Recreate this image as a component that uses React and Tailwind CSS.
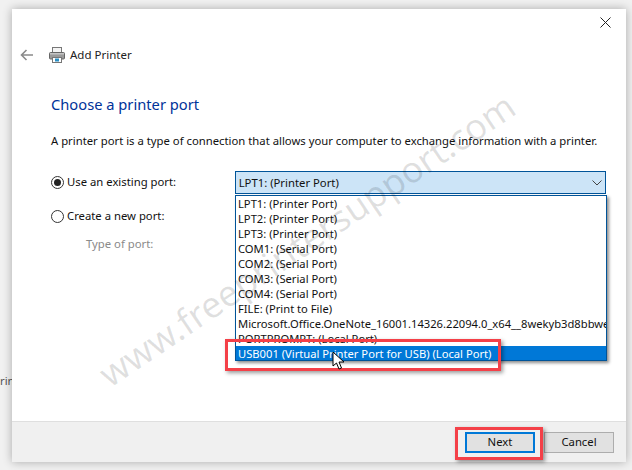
import React from 'react';

const ports = [
  'LPT1: (Printer Port)',
  'LPT2: (Printer Port)',
  'LPT3: (Printer Port)',
  'COM1: (Serial Port)',
  'COM2: (Serial Port)',
  'COM3: (Serial Port)',
  'COM4: (Serial Port)',
  'FILE: (Print to File)',
  'Microsoft.Office.OneNote_16001.14326.22094.0_x64__8wekyb3d8bbwe',
  'PORTPROMPT: (Local Port)',
];

const PrinterIcon = () => (
  <svg width="16" height="16" viewBox="0 0 16 16">
    <rect x="3.5" y="0.5" width="9" height="5" fill="#f4f4f4" stroke="#777" />
    <rect x="0.5" y="5.5" width="15" height="6.5" rx="1" fill="#9a9a9a" stroke="#666" />
    <rect x="1" y="6" width="14" height="1.5" fill="#c4c4c4" />
    <rect x="3.5" y="10.5" width="9" height="5" fill="#fff" stroke="#777" />
    <rect x="6" y="11.5" width="4" height="3" fill="#2a8fc4" />
  </svg>
);

const Radio = ({ checked }) => (
  <span className="w-[13px] h-[13px] rounded-full border border-[#333] flex items-center justify-center shrink-0 bg-white">
    {checked && <span className="w-[7px] h-[7px] rounded-full bg-[#222]" />}
  </span>
);

const Cursor = () => (
  <svg width="14" height="20" viewBox="0 0 14 20">
    <path d="M1 1 L1 15 L4.5 12 L7 18 L9.5 17 L7 11 L12 11 Z" fill="#fff" stroke="#000" strokeWidth="1" />
  </svg>
);

export default function App() {
  return (
    <div className="relative w-[632px] h-[470px] overflow-hidden bg-[#f1f1f1] pt-[9px] pl-[12px] font-['Noto_Sans',sans-serif] text-[11.3px] text-[#111]">
      {/* остаток текста за окном */}
      <span className="absolute left-0 top-[373px] text-[#555]">rin</span>

      <div className="relative w-[614px] h-[453px] bg-white flex flex-col shadow-[0_0_9px_rgba(0,0,0,0.3)]">
        <div className="flex justify-end pt-[8px] pr-[15px] h-[32px]">
          <svg width="11" height="11" viewBox="0 0 11 11" stroke="#222" strokeWidth="1">
            <path d="M0.5 0.5 L10.5 10.5 M10.5 0.5 L0.5 10.5" />
          </svg>
        </div>

        <div className="flex items-center h-[28px] pl-[8px]">
          <svg width="14" height="12" viewBox="0 0 14 12" fill="none" stroke="#8a8a8a" strokeWidth="1.6">
            <path d="M13 6 L1.5 6 M6.5 1 L1.5 6 L6.5 11" />
          </svg>
          <span className="ml-[15px]"><PrinterIcon /></span>
          <span className="ml-[5px] text-[#222] text-[11.5px]">Add Printer</span>
        </div>

        <div className="flex-1 pl-[39px] pr-[20px] pt-[24px]">
          <h1 className="text-[14.7px] leading-[22px] text-[#003399]">Choose a printer port</h1>
          <p className="mt-[16px] leading-[20px] whitespace-nowrap">A printer port is a type of connection that allows your computer to exchange information with a printer.</p>

          <div className="mt-[20px] flex items-center h-[23px]">
            <Radio checked />
            <span className="ml-[3px] w-[168px]">Use an existing port:</span>
            <div className="w-[372px] h-[23px] bg-[#cce4f7] border border-[#005499] flex items-center justify-between pl-[3px] pr-[3px]">
              <span className="pt-px">LPT1: (Printer Port)</span>
              <svg width="10" height="6" viewBox="0 0 10 6" fill="none" stroke="#444" strokeWidth="1">
                <path d="M0.5 0.5 L5 5 L9.5 0.5" />
              </svg>
            </div>
          </div>

          <div className="mt-[11px] flex items-center h-[23px]">
            <Radio />
            <span className="ml-[3px]">Create a new port:</span>
          </div>

          <div className="mt-[6px] ml-[35px] leading-[20px] text-[#8a8a8a]">Type of port:</div>
        </div>

        <div className="h-[41px] bg-[#f0f0f0] border-t border-[#dfdfdf] flex justify-end items-center gap-[9px] pr-[12px]">
          <button className="w-[70px] h-[21px] bg-[#e1e1e1] border-2 border-[#0078d7] text-[#111]">Next</button>
          <button className="w-[70px] h-[21px] bg-[#e1e1e1] border border-[#adadad] text-[#111]">Cancel</button>
        </div>
      </div>

      {/* раскрытый список */}
      <div className="absolute left-[235px] top-[195px] w-[372px] h-[166px] bg-white border border-[#005499] shadow-[2px_2px_3px_rgba(0,0,0,0.45)] overflow-hidden text-[11.2px]">
        {ports.map((p) => (
          <div key={p} className="h-[15px] leading-[15px] pl-[2px] whitespace-nowrap overflow-hidden">{p}</div>
        ))}
        <div className="h-[15px] leading-[15px] pl-[2px] whitespace-nowrap bg-[#0078d7] text-white">USB001 (Virtual Printer Port for USB) (Local Port)</div>
      </div>

      {/* водяной знак */}
      <div className="absolute left-[-9px] top-[222px] w-[632px] text-center -rotate-[34deg] text-[36px] leading-none whitespace-nowrap text-black/[0.12]">www.freeprintersupport.com</div>

      {/* красные рамки */}
      <div className="absolute left-[225px] top-[339px] w-[276px] h-[32px] border-[3px] border-[#f44048] shadow-[2px_2px_4px_rgba(0,0,0,0.4)]" />
      <div className="absolute left-[455px] top-[427px] w-[88px] h-[33px] border-[3px] border-[#f44048] shadow-[2px_2px_4px_rgba(0,0,0,0.4)]" />

      <div className="absolute left-[332px] top-[351px]"><Cursor /></div>
    </div>
  );
}
